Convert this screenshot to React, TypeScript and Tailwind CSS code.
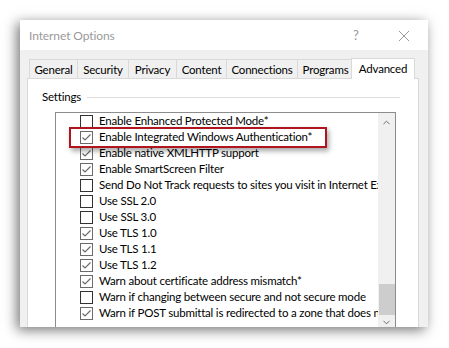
import { ChevronUp, ChevronDown } from "lucide-react";

const items: { label: string; checked: boolean }[] = [
  { label: "Enable Enhanced Protected Mode*", checked: false },
  { label: "Enable Integrated Windows Authentication*", checked: true },
  { label: "Enable native XMLHTTP support", checked: true },
  { label: "Enable SmartScreen Filter", checked: true },
  { label: "Send Do Not Track requests to sites you visit in Internet Explorer", checked: false },
  { label: "Use SSL 2.0", checked: false },
  { label: "Use SSL 3.0", checked: false },
  { label: "Use TLS 1.0", checked: true },
  { label: "Use TLS 1.1", checked: true },
  { label: "Use TLS 1.2", checked: true },
  { label: "Warn about certificate address mismatch*", checked: true },
  { label: "Warn if changing between secure and not secure mode", checked: false },
  { label: "Warn if POST submittal is redirected to a zone that does not permit posts", checked: true },
];

const tabs = [
  { name: "General", w: "w-[48px]" },
  { name: "Security", w: "w-[51px]" },
  { name: "Privacy", w: "w-[48px]" },
  { name: "Content", w: "w-[50px]" },
  { name: "Connections", w: "w-[71px]" },
  { name: "Programs", w: "w-[56px]" },
];

function CheckBox({ checked }: { checked: boolean }) {
  return (
    <div
      className={
        "w-[13px] h-[13px] shrink-0 border bg-white flex items-center justify-center " +
        (checked ? "border-[#6b6b6b]" : "border-[#333333]")
      }
    >
      {checked && (
        <svg width="11" height="11" viewBox="0 0 11 11">
          <path d="M1.5 5.5 L4 8 L9.5 2.5" fill="none" stroke="#6b6b6b" strokeWidth="1.2" />
        </svg>
      )}
    </div>
  );
}

export default function App() {
  return (
    <div className="relative w-[449px] h-[348px] bg-white pl-5 pt-5 overflow-hidden font-['Lato',sans-serif] text-[11.5px] tracking-[-0.2px] text-black">
      <div className="w-[408px] h-[307px] bg-[#f0f0f0] shadow-[-3px_3px_12px_rgba(0,0,0,0.55)] flex flex-col overflow-hidden">
        {/* title bar */}
        <div className="h-[30px] bg-white flex items-center shrink-0 pt-[1px]">
          <div className="pl-[9px] text-[12px] tracking-[-0.1px] text-[#9a9a9a] flex-1">Internet Options</div>
          <div className="w-[12px] text-[13px] text-[#9a9a9a] mr-[33px]">?</div>
          <svg width="12" height="12" viewBox="0 0 12 12" className="mr-[18px]">
            <path d="M1 1 L11 11 M11 1 L1 11" stroke="#9a9a9a" strokeWidth="1" />
          </svg>
        </div>

        {/* body */}
        <div className="flex-1 px-[7px] pt-[8px] flex flex-col">
          <div className="flex items-end h-[21px] pl-[2px] relative z-10">
            {tabs.map((t) => (
              <div
                key={t.name}
                className={
                  t.w +
                  " h-[19px] border border-b-0 border-r-0 border-[#d9d9d9] bg-[#f0f0f0] flex items-center justify-center leading-none mb-[1px] pt-[2px]"
                }
              >
                {t.name}
              </div>
            ))}
            <div className="w-[64px] h-[21px] -ml-[2px] border border-b-0 border-[#d9d9d9] bg-white flex items-start pt-[4px] justify-center leading-none">
              Advanced
            </div>
          </div>

          {/* panel */}
          <div className="flex-1 -mt-[1px] bg-white border border-[#d9d9d9] w-[392px] pt-[11px]">
            <div className="flex items-center pl-[14px] pr-[18px] h-[14px]">
              <span>Settings</span>
              <div className="flex-1 h-px bg-[#dcdcdc] ml-[6px]" />
            </div>
            <div className="ml-[27px] mt-[8px] w-[341px] h-[221px] border border-[#8c8c8c] flex">
              <div className="flex-1 overflow-hidden pt-[0px]">
                {items.map((it) => (
                  <div key={it.label} className="h-[16px] flex items-center pl-[24px] whitespace-nowrap">
                    <CheckBox checked={it.checked} />
                    <span className="ml-[6px]">{it.label}</span>
                  </div>
                ))}
              </div>
              <div className="w-[17px] bg-[#f0f0f0] flex flex-col items-center">
                <ChevronUp size={11} strokeWidth={2} className="text-[#606060] mt-[4px]" />
                <div className="flex-1" />
                <div className="w-[16px] h-[31px] bg-[#cdcdcd]" />
                <ChevronDown size={11} strokeWidth={2} className="text-[#606060] mt-[2px] mb-[4px]" />
              </div>
            </div>
          </div>
        </div>
      </div>

      {/* red highlight */}
      <div className="absolute left-[69px] top-[127px] w-[258px] h-[21px] border-2 border-[#b0141c] shadow-[2px_3px_5px_rgba(0,0,0,0.35)]" />
    </div>
  );
}
